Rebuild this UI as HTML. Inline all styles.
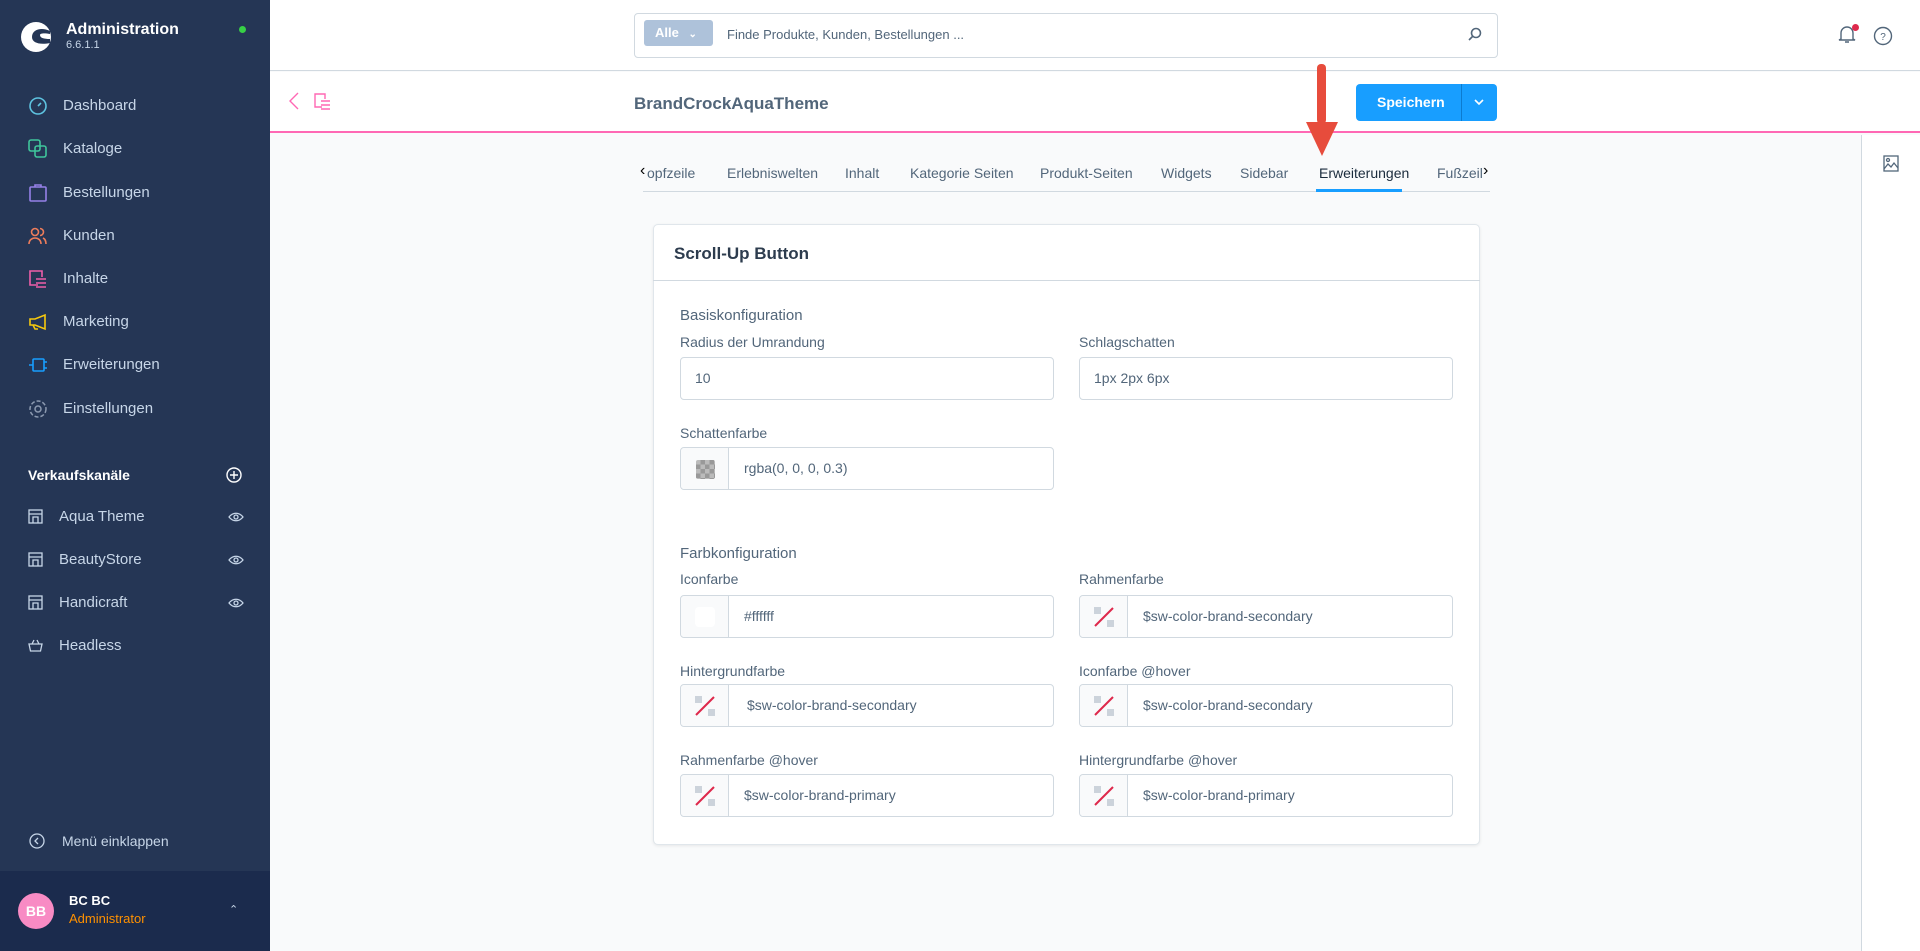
<!DOCTYPE html>
<html><head><meta charset="utf-8"><style>
*{box-sizing:border-box;margin:0;padding:0}
body{width:1920px;height:951px;overflow:hidden;font-family:"Liberation Sans",sans-serif;background:#f9fafb;position:relative;color:#52667a}
.abs{position:absolute}
#sb{left:0;top:0;width:270px;height:951px;background:#253655}
.nav{position:absolute;left:63px;font-size:15px;color:#c7d6e8}
.ic{position:absolute;left:28px;width:20px;height:20px}
.sc{position:absolute;left:59px;font-size:15px;color:#c7d6e8}
.lbl{position:absolute;font-size:14px;color:#52667a}
.inp{position:absolute;height:43px;background:#fff;border:1px solid #d1d9e0;border-radius:4px;font-size:14px;color:#52667a;line-height:41px}
.sw{position:absolute;left:0;top:0;width:48px;height:100%;border-right:1px solid #d1d9e0;background:#f9fafb;border-radius:4px 0 0 4px}
.tab{position:absolute;top:165px;font-size:14px;color:#52667a}
</style></head><body>
<div id="sb" class="abs">
 <svg class="abs" style="left:20px;top:21px" width="32" height="32" viewBox="0 0 32 32"><circle cx="16" cy="16" r="15" fill="#fff"/><path d="M30 10 C22 6 12 8 12 16 C12 22 20 24 30 22 L30 18 C24 18 20 17 20 14 C20 12 25 12 30 13Z" fill="#253655"/></svg>
 <div class="abs" style="left:66px;top:21px;font-size:16px;font-weight:bold;color:#fff">Administration</div>
 <div class="abs" style="left:66px;top:39px;font-size:11px;color:#c7d6e8">6.6.1.1</div>
 <div class="abs" style="left:239px;top:26px;width:7px;height:7px;border-radius:50%;background:#37d046"></div>
 <svg class="ic" style="top:96px" viewBox="0 0 20 20" fill="none" stroke="#5ec3e0" stroke-width="1.6"><circle cx="10" cy="10" r="8"/><path d="M10 10l3-3"/></svg><div class="nav" style="top:97px">Dashboard</div>
 <svg class="ic" style="top:139px" viewBox="0 0 20 20" fill="none" stroke="#3fc59b" stroke-width="1.6"><rect x="1" y="1" width="11" height="11" rx="2"/><rect x="7" y="7" width="11" height="11" rx="2"/></svg><div class="nav" style="top:140px">Kataloge</div>
 <svg class="ic" style="top:183px" viewBox="0 0 20 20" fill="none" stroke="#9580e8" stroke-width="1.6"><rect x="2" y="4" width="16" height="14" rx="1"/><path d="M7 4V2h6v2"/></svg><div class="nav" style="top:184px">Bestellungen</div>
 <svg class="ic" style="top:226px" viewBox="0 0 20 20" fill="none" stroke="#ee7d5b" stroke-width="1.6"><circle cx="7" cy="6" r="3.5"/><path d="M1 18c0-4 3-6 6-6s6 2 6 6M12 2.5a3.5 3.5 0 010 7M15 12c2 1 3 3 3 6"/></svg><div class="nav" style="top:227px">Kunden</div>
 <svg class="ic" style="top:269px" viewBox="0 0 20 20" fill="none" stroke="#ee5ea9" stroke-width="1.6"><path d="M10 16H2V2h12v6M8 10h10M8 14h10M8 18h10"/></svg><div class="nav" style="top:270px">Inhalte</div>
 <svg class="ic" style="top:312px" viewBox="0 0 20 20" fill="none" stroke="#f7c90e" stroke-width="1.6"><path d="M2 7h5l10-4v14L7 13H2zM5 13l2 4h3"/></svg><div class="nav" style="top:313px">Marketing</div>
 <svg class="ic" style="top:355px" viewBox="0 0 20 20" fill="none" stroke="#189eff" stroke-width="1.6"><rect x="5" y="4" width="11" height="12" rx="1"/><path d="M1 10h4M16 7h3M16 13h3"/></svg><div class="nav" style="top:356px">Erweiterungen</div>
 <svg class="ic" style="top:399px" viewBox="0 0 20 20" fill="none" stroke="#8c9ab0" stroke-width="1.5"><circle cx="10" cy="10" r="3"/><circle cx="10" cy="10" r="8" stroke-dasharray="4 2"/></svg><div class="nav" style="top:400px">Einstellungen</div>
 <div class="abs" style="left:28px;top:467px;font-size:14px;font-weight:bold;color:#fff">Verkaufskanäle</div>
 <svg class="abs" style="left:226px;top:467px" width="16" height="16" viewBox="0 0 16 16" fill="none" stroke="#fff" stroke-width="1.4"><circle cx="8" cy="8" r="7"/><path d="M8 4v8M4 8h8"/></svg>
 <svg class="abs" style="left:28px;top:509px" width="15" height="15" viewBox="0 0 15 15" fill="none" stroke="#c7d6e8" stroke-width="1.3"><rect x="1" y="1" width="13" height="13"/><path d="M1 5h13M5 14V8h5v6"/></svg><div class="sc" style="top:508px">Aqua Theme</div>
 <svg class="abs" style="left:28px;top:552px" width="15" height="15" viewBox="0 0 15 15" fill="none" stroke="#c7d6e8" stroke-width="1.3"><rect x="1" y="1" width="13" height="13"/><path d="M1 5h13M5 14V8h5v6"/></svg><div class="sc" style="top:551px">BeautyStore</div>
 <svg class="abs" style="left:28px;top:595px" width="15" height="15" viewBox="0 0 15 15" fill="none" stroke="#c7d6e8" stroke-width="1.3"><rect x="1" y="1" width="13" height="13"/><path d="M1 5h13M5 14V8h5v6"/></svg><div class="sc" style="top:594px">Handicraft</div>
 <svg class="abs" style="left:28px;top:638px" width="15" height="15" viewBox="0 0 15 15" fill="none" stroke="#c7d6e8" stroke-width="1.3"><path d="M1 6h13l-1.5 7h-10zM4 6l2-4M11 6l-2-4"/></svg><div class="sc" style="top:637px">Headless</div>
 <svg class="abs" style="left:228px;top:512px" width="16" height="10" viewBox="0 0 16 10" fill="none" stroke="#c7d6e8" stroke-width="1.3"><path d="M1 5c4-5 10-5 14 0c-4 5-10 5-14 0z"/><circle cx="8" cy="5" r="2"/></svg>
 <svg class="abs" style="left:228px;top:555px" width="16" height="10" viewBox="0 0 16 10" fill="none" stroke="#c7d6e8" stroke-width="1.3"><path d="M1 5c4-5 10-5 14 0c-4 5-10 5-14 0z"/><circle cx="8" cy="5" r="2"/></svg>
 <svg class="abs" style="left:228px;top:598px" width="16" height="10" viewBox="0 0 16 10" fill="none" stroke="#c7d6e8" stroke-width="1.3"><path d="M1 5c4-5 10-5 14 0c-4 5-10 5-14 0z"/><circle cx="8" cy="5" r="2"/></svg>
 <svg class="abs" style="left:29px;top:833px" width="16" height="16" viewBox="0 0 16 16" fill="none" stroke="#c7d6e8" stroke-width="1.3"><circle cx="8" cy="8" r="7"/><path d="M9 5L6 8l3 3"/></svg>
 <div class="abs" style="left:62px;top:833px;font-size:14px;color:#c7d6e8">Menü einklappen</div>
 <div class="abs" style="left:0;top:871px;width:270px;height:80px;background:#1b2b4d"></div>
 <div class="abs" style="left:18px;top:893px;width:36px;height:36px;border-radius:50%;background:#f88bc4;color:#fff;font-weight:bold;font-size:14px;text-align:center;line-height:36px">BB</div>
 <div class="abs" style="left:69px;top:893px;font-size:13px;font-weight:bold;color:#fff">BC BC</div>
 <div class="abs" style="left:69px;top:911px;font-size:13px;color:#ff9100">Administrator</div>
 <div class="abs" style="left:229px;top:903px;font-size:11px;color:#c7d6e8">&#8963;</div>
</div>
<!-- top bar -->
<div class="abs" style="left:270px;top:0;width:1650px;height:71px;background:#fff;border-bottom:1px solid #d1d9e0"></div>
<div class="abs" style="left:634px;top:13px;width:864px;height:45px;border:1px solid #d1d9e0;border-radius:4px;background:#fff"></div>
<div class="abs" style="left:644px;top:20px;width:69px;height:26px;background:#aec2da;border-radius:3px;color:#fff;font-size:13px;font-weight:bold;line-height:26px;padding-left:11px">Alle <span style="font-size:10px;margin-left:6px">&#8964;</span></div>
<div class="abs" style="left:727px;top:27px;font-size:13px;color:#52667a">Finde Produkte, Kunden, Bestellungen ...</div>
<svg class="abs" style="left:1468px;top:27px" width="14" height="14" viewBox="0 0 14 14" fill="none" stroke="#52667a" stroke-width="1.6"><circle cx="8" cy="6" r="4.5"/><path d="M5 9l-4 4"/></svg>
<svg class="abs" style="left:1838px;top:24px" width="18" height="20" viewBox="0 0 18 20" fill="none" stroke="#52667a" stroke-width="1.4"><path d="M3 15V9a6 6 0 0112 0v6l2 1H1zM7 18h4"/></svg>
<div class="abs" style="left:1852px;top:24px;width:7px;height:7px;border-radius:50%;background:#de294c"></div>
<svg class="abs" style="left:1873px;top:26px" width="20" height="20" viewBox="0 0 20 20" fill="none" stroke="#52667a" stroke-width="1.4"><circle cx="10" cy="10" r="8.5"/><text x="10" y="14" font-size="10" text-anchor="middle" fill="#52667a" stroke="none" font-family="Liberation Sans">?</text></svg>
<!-- sub header -->
<div class="abs" style="left:270px;top:72px;width:1650px;height:61px;background:#fff;border-bottom:2px solid #ff68b4"></div>
<svg class="abs" style="left:288px;top:92px" width="12" height="18" viewBox="0 0 12 18" fill="none" stroke="#ff68b4" stroke-width="1.4"><path d="M10 1L2 9l8 8"/></svg>
<svg class="abs" style="left:314px;top:93px" width="17" height="17" viewBox="0 0 17 17" fill="none" stroke="#ff68b4" stroke-width="1.4"><path d="M8 14H1V1h10v5M7 8h9M7 12h9M7 16h9"/></svg>
<div class="abs" style="left:634px;top:94px;font-size:17px;font-weight:bold;color:#52667a">BrandCrockAquaTheme</div>
<div class="abs" style="left:1356px;top:84px;width:141px;height:37px;background:#189eff;border-radius:4px"></div>
<div class="abs" style="left:1461px;top:84px;width:1px;height:37px;background:#0c7bd0"></div>
<div class="abs" style="left:1377px;top:94px;font-size:14px;font-weight:bold;color:#fff">Speichern</div>
<svg class="abs" style="left:1474px;top:99px" width="10" height="7" viewBox="0 0 10 7" fill="none" stroke="#fff" stroke-width="1.6"><path d="M1 1l4 4 4-4"/></svg>
<!-- right panel -->
<div class="abs" style="left:1861px;top:135px;width:59px;height:816px;background:#fff;border-left:1px solid #d1d9e0"></div>
<svg class="abs" style="left:1883px;top:155px" width="16" height="17" viewBox="0 0 16 17" fill="none" stroke="#52667a" stroke-width="1.3"><rect x="1" y="1" width="14" height="15"/><circle cx="5" cy="5" r="1.5"/><path d="M1 14l4-5 3 3 3-4 4 5"/></svg>
<!-- tabs -->
<div class="abs" style="left:643px;top:191px;width:847px;height:1px;background:#d1d9e0"></div>
<div class="abs" style="left:1316px;top:189px;width:86px;height:3px;background:#189eff"></div>
<div class="tab" style="left:640px;color:#000;font-size:16px;top:162px">&#8249;</div>
<div class="tab" style="left:647px">opfzeile</div>
<div class="tab" style="left:727px">Erlebniswelten</div>
<div class="tab" style="left:845px">Inhalt</div>
<div class="tab" style="left:910px">Kategorie Seiten</div>
<div class="tab" style="left:1040px">Produkt-Seiten</div>
<div class="tab" style="left:1161px">Widgets</div>
<div class="tab" style="left:1240px">Sidebar</div>
<div class="tab" style="left:1319px;color:#1a2b3c">Erweiterungen</div>
<div class="tab" style="left:1437px">Fußzeil</div>
<div class="tab" style="left:1483px;color:#000;font-size:16px;top:162px">&#8250;</div>
<div class="abs" style="left:1317px;top:64px;width:9px;height:60px;background:#e74c3c;border-radius:4px"></div>
<div class="abs" style="left:1306px;top:122px;width:0;height:0;border-left:16px solid transparent;border-right:16px solid transparent;border-top:34px solid #e74c3c"></div>
<!-- card -->
<div class="abs" style="left:653px;top:224px;width:827px;height:621px;background:#fff;border:1px solid #e0e6eb;border-radius:5px;box-shadow:0 1px 3px rgba(0,0,0,.08)"></div>
<div class="abs" style="left:653px;top:280px;width:827px;height:1px;background:#d1d9e0"></div>
<div class="abs" style="left:674px;top:244px;font-size:17px;font-weight:bold;color:#2d3c4e">Scroll-Up Button</div>
<div class="lbl" style="left:680px;top:307px;font-size:15px">Basiskonfiguration</div>
<div class="lbl" style="left:680px;top:334px">Radius der Umrandung</div>
<div class="lbl" style="left:1079px;top:334px">Schlagschatten</div>
<div class="inp" style="left:680px;top:357px;width:374px;padding-left:14px">10</div>
<div class="inp" style="left:1079px;top:357px;width:374px;padding-left:14px">1px 2px 6px</div>
<div class="lbl" style="left:680px;top:425px">Schattenfarbe</div>
<div class="inp" style="left:680px;top:447px;width:374px;padding-left:63px"><div class="sw"><div style="position:absolute;left:15px;top:12px;width:19px;height:19px;border-radius:2px;background:repeating-conic-gradient(#999 0 25%,#bbb 0 50%) 0 0/9px 9px"></div></div>rgba(0, 0, 0, 0.3)</div>
<div class="lbl" style="left:680px;top:545px;font-size:15px">Farbkonfiguration</div>
<div class="lbl" style="left:680px;top:571px">Iconfarbe</div>
<div class="lbl" style="left:1079px;top:571px">Rahmenfarbe</div>
<div class="lbl" style="left:680px;top:663px">Hintergrundfarbe</div>
<div class="lbl" style="left:1079px;top:663px">Iconfarbe @hover</div>
<div class="lbl" style="left:680px;top:752px">Rahmenfarbe @hover</div>
<div class="lbl" style="left:1079px;top:752px">Hintergrundfarbe @hover</div>
<div class="inp" style="left:680px;top:595px;width:374px;padding-left:63px"><div class="sw"><div style="position:absolute;left:14px;top:11px;width:20px;height:20px;border-radius:4px;background:#fff"></div></div>#ffffff</div>
<div class="inp" style="left:1079px;top:595px;width:374px;padding-left:63px"><div class="sw"><svg style="position:absolute;left:14px;top:11px" width="20" height="20"><rect x="0" y="0" width="7" height="7" fill="#ccd3db"/><rect x="13" y="13" width="7" height="7" fill="#ccd3db"/><path d="M1 19L19 1" stroke="#de294c" stroke-width="2"/></svg></div>$sw-color-brand-secondary</div>
<div class="inp" style="left:680px;top:684px;width:374px;padding-left:66px"><div class="sw"><svg style="position:absolute;left:14px;top:11px" width="20" height="20"><rect x="0" y="0" width="7" height="7" fill="#ccd3db"/><rect x="13" y="13" width="7" height="7" fill="#ccd3db"/><path d="M1 19L19 1" stroke="#de294c" stroke-width="2"/></svg></div>$sw-color-brand-secondary</div>
<div class="inp" style="left:1079px;top:684px;width:374px;padding-left:63px"><div class="sw"><svg style="position:absolute;left:14px;top:11px" width="20" height="20"><rect x="0" y="0" width="7" height="7" fill="#ccd3db"/><rect x="13" y="13" width="7" height="7" fill="#ccd3db"/><path d="M1 19L19 1" stroke="#de294c" stroke-width="2"/></svg></div>$sw-color-brand-secondary</div>
<div class="inp" style="left:680px;top:774px;width:374px;padding-left:63px"><div class="sw"><svg style="position:absolute;left:14px;top:11px" width="20" height="20"><rect x="0" y="0" width="7" height="7" fill="#ccd3db"/><rect x="13" y="13" width="7" height="7" fill="#ccd3db"/><path d="M1 19L19 1" stroke="#de294c" stroke-width="2"/></svg></div>$sw-color-brand-primary</div>
<div class="inp" style="left:1079px;top:774px;width:374px;padding-left:63px"><div class="sw"><svg style="position:absolute;left:14px;top:11px" width="20" height="20"><rect x="0" y="0" width="7" height="7" fill="#ccd3db"/><rect x="13" y="13" width="7" height="7" fill="#ccd3db"/><path d="M1 19L19 1" stroke="#de294c" stroke-width="2"/></svg></div>$sw-color-brand-primary</div>
</body></html>
